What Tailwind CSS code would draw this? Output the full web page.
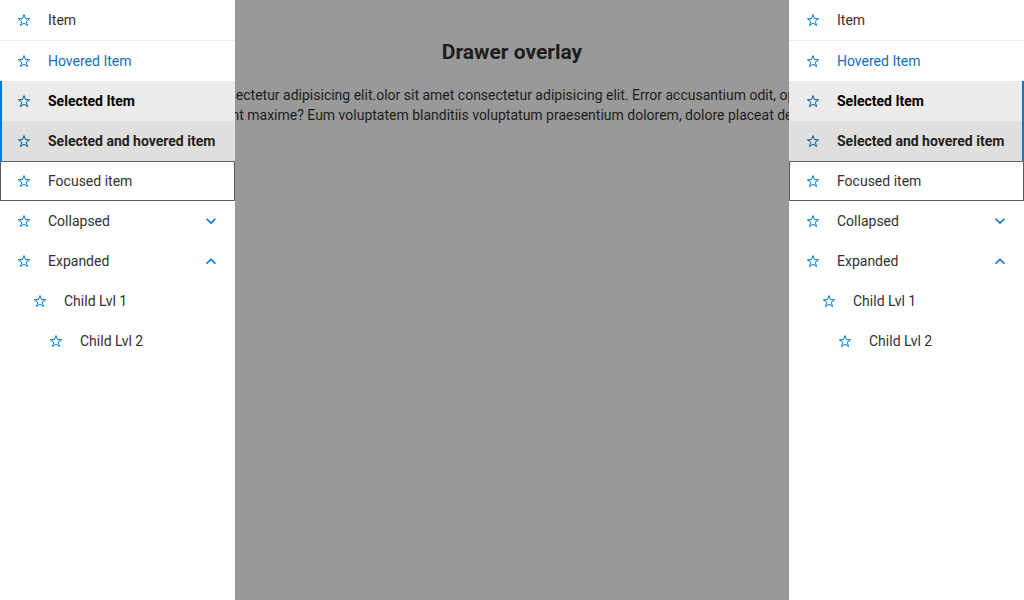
<!DOCTYPE html>
<html lang="en">
<head>
<meta charset="utf-8">
<meta name="viewport" content="width=device-width, initial-scale=1">
<title>Drawer overlay</title>
<script src="https://cdn.jsdelivr.net/npm/@tailwindcss/browser@4"></script>
</head>
<body class="relative flex min-h-screen overflow-x-hidden bg-white font-['Roboto',sans-serif] text-sm text-[#323130]">
<svg class="hidden" aria-hidden="true">
  <symbol id="star" viewBox="0 0 16 16"><path d="M8 2.6 L9.5 6.7 H13.6 L10.3 9.3 L11.6 13.7 L8 11.1 L4.4 13.7 L5.7 9.3 L2.4 6.7 H6.5 Z" fill="none" stroke="currentColor" stroke-width="1" stroke-miterlimit="10"/></symbol>
  <symbol id="down" viewBox="0 0 16 16"><path d="M3.6 5.7 L8 10.1 L12.4 5.7" fill="none" stroke="currentColor" stroke-width="1.6"/></symbol>
  <symbol id="up" viewBox="0 0 16 16"><path d="M3.6 10.6 L8 6.3 L12.4 10.6" fill="none" stroke="currentColor" stroke-width="1.6"/></symbol>
</svg>

<nav aria-label="Left drawer" class="z-10 w-[235px] shrink-0 bg-white whitespace-nowrap">
  <button class="flex h-[41px] w-full items-center gap-4 border-b border-[#edebe9] px-4"><svg class="size-4 text-[#0078d4]"><use href="#star"/></svg>Item</button>
  <button class="flex h-10 w-full items-center gap-4 px-4 text-[#106ebe]"><svg class="size-4"><use href="#star"/></svg>Hovered Item</button>
  <button class="flex h-10 w-full items-center gap-4 bg-[#edebe9] px-4 font-bold text-black shadow-[inset_2px_0_#0078d4]"><svg class="size-4 text-[#005a9e]"><use href="#star"/></svg>Selected Item</button>
  <button class="flex h-10 w-full items-center gap-4 bg-[#e1dfdd] px-4 font-bold text-[#201f1e] shadow-[inset_2px_0_#0078d4]"><svg class="size-4 shrink-0 text-[#005a9e]"><use href="#star"/></svg>Selected and hovered item</button>
  <button class="flex h-10 w-full items-center gap-4 px-4 outline -outline-offset-1 outline-[#605e5c]"><svg class="size-4 text-[#0078d4]"><use href="#star"/></svg>Focused item</button>
  <button aria-expanded="false" class="flex h-10 w-full items-center gap-4 px-4"><svg class="size-4 text-[#0078d4]"><use href="#star"/></svg>Collapsed<svg class="ml-auto size-4 text-[#0078d4]"><use href="#down"/></svg></button>
  <button aria-expanded="true" class="flex h-10 w-full items-center gap-4 px-4"><svg class="size-4 text-[#0078d4]"><use href="#star"/></svg>Expanded<svg class="ml-auto size-4 text-[#0078d4]"><use href="#up"/></svg></button>
  <button class="flex h-10 w-full items-center gap-4 pr-4 pl-8"><svg class="size-4 text-[#0078d4]"><use href="#star"/></svg>Child Lvl 1</button>
  <button class="flex h-10 w-full items-center gap-4 pr-4 pl-12"><svg class="size-4 text-[#0078d4]"><use href="#star"/></svg>Child Lvl 2</button>
</nav>

<main class="min-w-0 flex-1 overflow-hidden bg-[#999999] pt-9 text-[#1e1d1d]">
  <h1 class="text-center text-[21px] leading-8 font-bold">Drawer overlay</h1>
  <div class="mt-[17px] flex flex-col items-center leading-5 whitespace-nowrap">
    <p>sectetur adipisicing elit.olor sit amet consectetur adipisicing elit. Error accusantium odit, op</p>
    <p>nt maxime? Eum voluptatem blanditiis voluptatum praesentium dolorem, dolore placeat de</p>
  </div>
</main>

<nav aria-label="Right drawer" class="z-10 w-[235px] shrink-0 bg-white whitespace-nowrap">
  <button class="flex h-[41px] w-full items-center gap-4 border-b border-[#edebe9] px-4"><svg class="size-4 text-[#0078d4]"><use href="#star"/></svg>Item</button>
  <button class="flex h-10 w-full items-center gap-4 px-4 text-[#106ebe]"><svg class="size-4"><use href="#star"/></svg>Hovered Item</button>
  <button class="flex h-10 w-full items-center gap-4 bg-[#edebe9] px-4 font-bold text-black shadow-[inset_-2px_0_#0078d4]"><svg class="size-4 text-[#005a9e]"><use href="#star"/></svg>Selected Item</button>
  <button class="flex h-10 w-full items-center gap-4 bg-[#e1dfdd] px-4 font-bold text-[#201f1e] shadow-[inset_-2px_0_#0078d4]"><svg class="size-4 shrink-0 text-[#005a9e]"><use href="#star"/></svg>Selected and hovered item</button>
  <button class="flex h-10 w-full items-center gap-4 px-4 outline -outline-offset-1 outline-[#605e5c]"><svg class="size-4 text-[#0078d4]"><use href="#star"/></svg>Focused item</button>
  <button aria-expanded="false" class="flex h-10 w-full items-center gap-4 px-4"><svg class="size-4 text-[#0078d4]"><use href="#star"/></svg>Collapsed<svg class="ml-auto size-4 text-[#0078d4]"><use href="#down"/></svg></button>
  <button aria-expanded="true" class="flex h-10 w-full items-center gap-4 px-4"><svg class="size-4 text-[#0078d4]"><use href="#star"/></svg>Expanded<svg class="ml-auto size-4 text-[#0078d4]"><use href="#up"/></svg></button>
  <button class="flex h-10 w-full items-center gap-4 pr-4 pl-8"><svg class="size-4 text-[#0078d4]"><use href="#star"/></svg>Child Lvl 1</button>
  <button class="flex h-10 w-full items-center gap-4 pr-4 pl-12"><svg class="size-4 text-[#0078d4]"><use href="#star"/></svg>Child Lvl 2</button>
</nav>
</body>
</html>
